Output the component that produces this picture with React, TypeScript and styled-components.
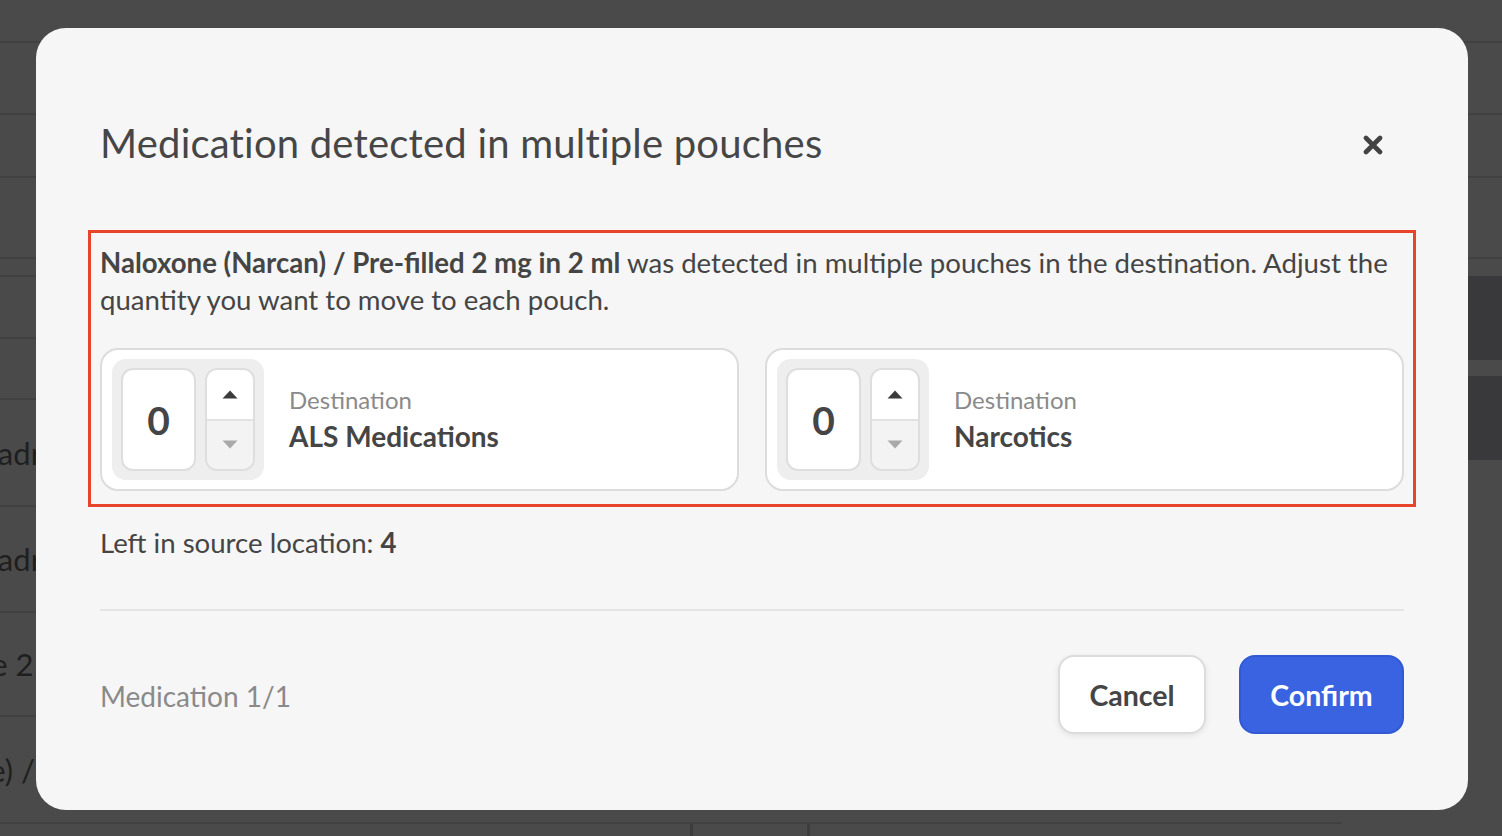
import React from "react";
import styled, { createGlobalStyle } from "styled-components";

const Global = createGlobalStyle`
  html, body { margin: 0; padding: 0; }
  body {
    width: 1502px;
    height: 836px;
    overflow: hidden;
    background: #4a4a4a;
    font-family: Lato, "Open Sans", "Liberation Sans", sans-serif;
  }
  * { box-sizing: border-box; }
`;

/* ---------- dimmed page behind the dialog ---------- */

const Backdrop = styled.div`
  width: 1502px;
  height: 836px;
  display: flex;
  flex-direction: column;
  background: #4a4a4a;
  overflow: hidden;
`;

const BandRow = styled.div<{ $h: number }>`
  height: ${(p) => p.$h}px;
  flex: none;
  border-bottom: 2px solid #414141;
`;

const Body = styled.div`
  flex: 1;
  display: flex;
  min-height: 0;
`;

const Table = styled.div`
  flex: 1;
  display: flex;
  flex-direction: column;
`;

const TableRow = styled.div<{ $h: number }>`
  height: ${(p) => p.$h}px;
  flex: none;
  display: flex;
  align-items: center;
  border-bottom: 2px solid #414141;
  overflow: hidden;
`;

const LeftCell = styled.div<{ $indent: number }>`
  width: 120px;
  flex: none;
  white-space: nowrap;
  overflow: hidden;
  text-indent: ${(p) => p.$indent}px;
  font-size: 31px;
  color: #1f1f1f;
`;

const FootRow = styled.div`
  flex: 1;
  display: flex;
`;

const FootCell = styled.div<{ $w: number }>`
  width: ${(p) => p.$w}px;
  flex: none;
  border-right: 3px solid #3d3d3d;
  padding-top: 12px;
`;

const FootLine = styled.div`
  width: 673px;
  height: 3px;
  background: #3d3d3d;
`;

const Side = styled.div`
  width: 160px;
  flex: none;
  display: flex;
  flex-direction: column;
  gap: 16px;
  padding-top: 17px;
`;

const SideBlock = styled.div`
  height: 84px;
  background: #39393b;
`;

/* ---------- dialog ---------- */

const Overlay = styled.div`
  position: fixed;
  inset: 0;
  padding: 28px 34px 26px 36px;
  display: flex;
`;

const Dialog = styled.div`
  flex: 1;
  background: #f6f6f6;
  border-radius: 30px;
  padding: 90px 64px 76px;
  display: flex;
  flex-direction: column;
  color: #454545;
`;

const Header = styled.div`
  display: flex;
  align-items: center;
  justify-content: space-between;
  height: 50px;
`;

const Title = styled.h1`
  margin: 0;
  font-size: 40px;
  font-weight: 400;
  line-height: 50px;
  color: #464646;
  letter-spacing: 0.2px;
`;

const CloseButton = styled.button`
  width: 20px;
  height: 20px;
  margin-right: 21px;
  margin-top: 4px;
  padding: 0;
  border: none;
  background: none;
  display: flex;
  cursor: pointer;
`;

const Highlight = styled.div`
  margin: 62px -12px 0;
  border: 3px solid #e8442b;
  padding: 11px 9px 13px;
  display: flex;
  flex-direction: column;
  gap: 30px;
`;

const Message = styled.p`
  margin: 0;
  font-size: 27.6px;
  line-height: 37px;
  color: #454545;
  & strong { font-weight: 700; }
`;

const Cards = styled.div`
  display: grid;
  grid-template-columns: 1fr 1fr;
  gap: 26px;
`;

const Card = styled.div`
  background: #ffffff;
  border: 2px solid #dcdcdc;
  border-radius: 18px;
  padding: 9px 10px;
  display: flex;
  align-items: center;
  gap: 25px;
`;

const Stepper = styled.div`
  background: #eeeeee;
  border-radius: 14px;
  padding: 9px;
  display: flex;
  gap: 9px;
`;

const ValueBox = styled.div`
  width: 75px;
  height: 103px;
  background: #fff;
  border: 2px solid #dedede;
  border-radius: 12px;
  display: flex;
  align-items: center;
  justify-content: center;
  font-size: 39px;
  font-weight: 700;
  color: #454545;
`;

const Arrows = styled.div`
  width: 50px;
  height: 103px;
  border: 2px solid #dedede;
  border-radius: 12px;
  overflow: hidden;
  display: flex;
  flex-direction: column;
`;

const ArrowButton = styled.button<{ $down?: boolean }>`
  flex: 1;
  border: none;
  padding: 0;
  margin: 0;
  display: flex;
  align-items: center;
  justify-content: center;
  background: ${(p) => (p.$down ? "#f3f3f3" : "#ffffff")};
  border-top: ${(p) => (p.$down ? "2px solid #e2e2e2" : "none")};
  cursor: pointer;
`;

const CardText = styled.div`
  display: flex;
  flex-direction: column;
  gap: 2px;
  margin-top: -2px;
`;

const CardLabel = styled.div`
  font-size: 24px;
  line-height: 32px;
  color: #8a8a8a;
`;

const CardName = styled.div`
  font-size: 28px;
  line-height: 36px;
  font-weight: 700;
  color: #454545;
`;

const Remaining = styled.div`
  margin-top: 18px;
  font-size: 27.6px;
  line-height: 36px;
  color: #454545;
  & strong { font-weight: 700; }
`;

const Divider = styled.hr`
  margin: 48px 0 0;
  border: none;
  height: 2px;
  background: #e4e4e4;
`;

const Footer = styled.div`
  margin-top: 44px;
  display: flex;
  align-items: center;
  justify-content: space-between;
`;

const Counter = styled.div`
  font-size: 28px;
  color: #8a8a8a;
  margin-top: 2px;
`;

const Actions = styled.div`
  display: flex;
  gap: 33px;
`;

const Button = styled.button<{ $primary?: boolean }>`
  height: 79px;
  width: ${(p) => (p.$primary ? 165 : 148)}px;
  padding: 0;
  border-radius: 16px;
  font-family: inherit;
  font-size: 28.5px;
  font-weight: 700;
  cursor: pointer;
  background: ${(p) => (p.$primary ? "#3a63e2" : "#ffffff")};
  color: ${(p) => (p.$primary ? "#ffffff" : "#454545")};
  border: 2px solid ${(p) => (p.$primary ? "#3159d3" : "#dcdcdc")};
  box-shadow: ${(p) => (p.$primary ? "none" : "0 2px 6px rgba(0,0,0,0.08)")};
`;

const UpIcon = () => (
  <svg width="16" height="9" viewBox="0 0 16 9">
    <path d="M8 0.5 L15.5 8.5 H0.5 Z" fill="#3b3b3b" />
  </svg>
);

const DownIcon = () => (
  <svg width="16" height="9" viewBox="0 0 16 9">
    <path d="M0.5 0.5 H15.5 L8 8.5 Z" fill="#a9a9a9" />
  </svg>
);

const CloseIcon = () => (
  <svg width="20" height="20" viewBox="0 0 20 20">
    <path
      d="M3 3 L17 17 M17 3 L3 17"
      stroke="#434343"
      strokeWidth="4.6"
      strokeLinecap="round"
    />
  </svg>
);

const destinations = ["ALS Medications", "Narcotics"];

export default function App() {
  return (
    <>
      <Global />
      <Backdrop>
        <BandRow $h={43} />
        <BandRow $h={72} />
        <BandRow $h={63} />
        <BandRow $h={81} />
        <Body>
          <Table>
            <TableRow $h={18} />
            <TableRow $h={62} />
            <TableRow $h={61} />
            <TableRow $h={107}>
              <LeftCell $indent={-44}>Quadrant</LeftCell>
            </TableRow>
            <TableRow $h={106}>
              <LeftCell $indent={-44}>Quadrant</LeftCell>
            </TableRow>
            <TableRow $h={104}>
              <LeftCell $indent={-44}>Ave 2</LeftCell>
            </TableRow>
            <TableRow $h={107}>
              <LeftCell $indent={-103}>(Syringe) / 1</LeftCell>
            </TableRow>
            <FootRow>
              <FootCell $w={693}>
                <FootLine />
              </FootCell>
              <FootCell $w={117} />
            </FootRow>
          </Table>
          <Side>
            <SideBlock />
            <SideBlock />
          </Side>
        </Body>
      </Backdrop>

      <Overlay>
        <Dialog>
          <Header>
            <Title>Medication detected in multiple pouches</Title>
            <CloseButton aria-label="Close">
              <CloseIcon />
            </CloseButton>
          </Header>

          <Highlight>
            <Message>
              <strong>Naloxone (Narcan) / Pre-filled 2 mg in 2 ml</strong> was
              detected in multiple pouches in the destination. Adjust the
              quantity you want to move to each pouch.
            </Message>
            <Cards>
              {destinations.map((name) => (
                <Card key={name}>
                  <Stepper>
                    <ValueBox>0</ValueBox>
                    <Arrows>
                      <ArrowButton aria-label="Increase">
                        <UpIcon />
                      </ArrowButton>
                      <ArrowButton $down aria-label="Decrease">
                        <DownIcon />
                      </ArrowButton>
                    </Arrows>
                  </Stepper>
                  <CardText>
                    <CardLabel>Destination</CardLabel>
                    <CardName>{name}</CardName>
                  </CardText>
                </Card>
              ))}
            </Cards>
          </Highlight>

          <Remaining>
            Left in source location: <strong>4</strong>
          </Remaining>

          <Divider />

          <Footer>
            <Counter>Medication 1/1</Counter>
            <Actions>
              <Button>Cancel</Button>
              <Button $primary>Confirm</Button>
            </Actions>
          </Footer>
        </Dialog>
      </Overlay>
    </>
  );
}
